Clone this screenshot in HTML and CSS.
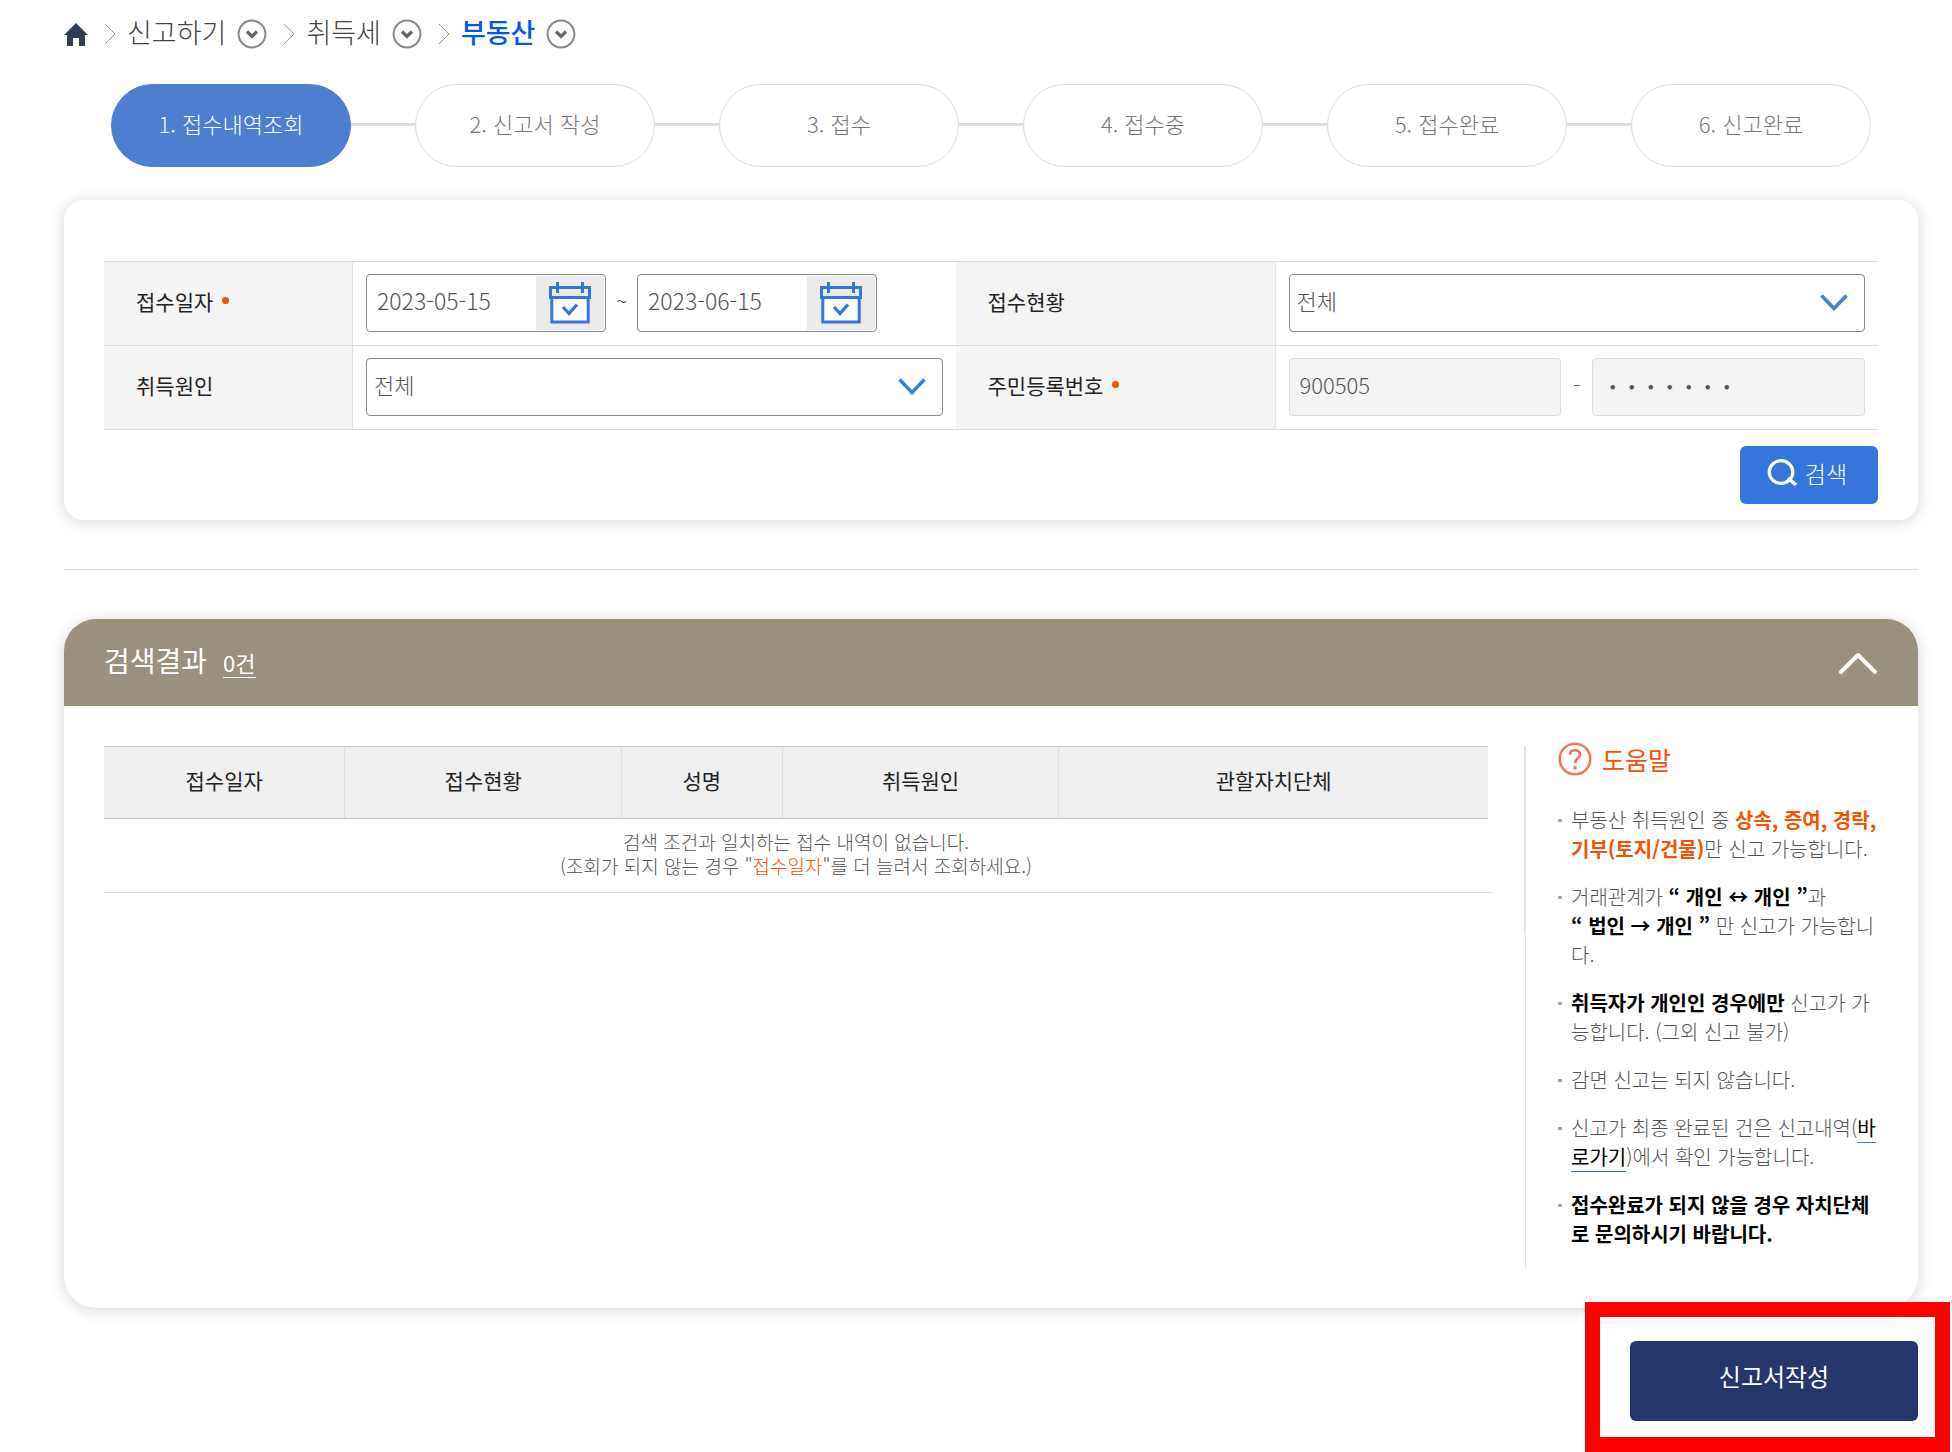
FILE: index.html
```html
<!DOCTYPE html>
<html lang="ko">
<head>
<meta charset="utf-8">
<meta name="viewport" content="width=device-width, initial-scale=1">
<title>취득세 신고 - 부동산</title>
<link rel="stylesheet" href="styles.css">
</head>
<body>
<svg class="defs" aria-hidden="true">
  <symbol id="i-sep" viewBox="0 0 12 22"><path d="M1 1l10 10L1 21" fill="none" stroke="#999" stroke-width="1"/></symbol>
  <symbol id="i-drop" viewBox="0 0 30 30"><circle cx="15" cy="15" r="13.4" fill="#fff" stroke="#888" stroke-width="2"/><path d="M10 12.500l5 5 5-5" fill="none" stroke="#666" stroke-width="3.200"/></symbol>
  <symbol id="i-chev" viewBox="0 0 28 17"><path d="M1.500 1.500L14 14.500 26.500 1.500" fill="none" stroke="#4a80d2" stroke-width="3.600"/></symbol>
  <symbol id="i-cal" viewBox="0 0 44 44">
    <path d="M3.500 18h37v23h-37z" fill="#fff"/>
    <path d="M2.500 6.500h39v10h-39zM3.800 17v24h36.400V17" fill="none" stroke="#3675dc" stroke-width="3"/>
    <path d="M9.500 1v11M34.500 1v11" fill="none" stroke="#3675dc" stroke-width="3"/>
    <path d="M15 26l6 6.500 8-9" fill="none" stroke="#3675dc" stroke-width="3.200"/>
  </symbol>
</svg>
<main class="page">
  <nav class="crumbs" aria-label="현재 위치">
    <a class="home" href="#" aria-label="홈"><svg width="24" height="23" viewBox="0 0 24 23"><path d="M12 0L24 12h-3v11h-6v-8H9v8H3V12H0z" fill="#323c55"/></svg></a>
    <svg class="sep"><use href="#i-sep"/></svg>
    <a href="#">신고하기</a><button class="drop" aria-label="신고하기 메뉴"><svg><use href="#i-drop"/></svg></button>
    <svg class="sep"><use href="#i-sep"/></svg>
    <a href="#">취득세</a><button class="drop" aria-label="취득세 메뉴"><svg><use href="#i-drop"/></svg></button>
    <svg class="sep"><use href="#i-sep"/></svg>
    <a class="current" href="#" aria-current="page">부동산</a><button class="drop" aria-label="부동산 메뉴"><svg><use href="#i-drop"/></svg></button>
  </nav>

  <ol class="steps">
    <li class="on"><span>1. 접수내역조회</span></li>
    <li><span>2. 신고서 작성</span></li>
    <li><span>3. 접수</span></li>
    <li><span>4. 접수중</span></li>
    <li><span>5. 접수완료</span></li>
    <li><span>6. 신고완료</span></li>
  </ol>

  <form class="search">
    <div class="fields">
      <label class="name req" for="from">접수일자</label>
      <div class="value">
        <div class="date"><input id="from" type="text" value="2023-05-15"><button type="button" aria-label="시작일 선택"><svg><use href="#i-cal"/></svg></button></div>
        <span class="mid">~</span>
        <div class="date"><input type="text" value="2023-06-15" aria-label="종료일"><button type="button" aria-label="종료일 선택"><svg><use href="#i-cal"/></svg></button></div>
      </div>
      <label class="name" for="state">접수현황</label>
      <div class="value"><div class="select"><select id="state"><option>전체</option></select><svg><use href="#i-chev"/></svg></div></div>
      <label class="name" for="cause">취득원인</label>
      <div class="value"><div class="select"><select id="cause"><option>전체</option></select><svg><use href="#i-chev"/></svg></div></div>
      <label class="name req" for="rrn">주민등록번호</label>
      <div class="value">
        <input class="off" id="rrn" type="text" value="900505" disabled>
        <span class="mid">-</span>
        <input class="off mask" type="text" value="・・・・・・・" aria-label="주민등록번호 뒷자리" disabled>
      </div>
    </div>
    <button class="find" type="button"><svg width="30" height="28" viewBox="0 0 30 28"><ellipse cx="14" cy="13" rx="11.800" ry="11.300" fill="none" stroke="#fff" stroke-width="3.200"/><path d="M21 19l8 7" stroke="#fff" stroke-width="3.600"/></svg>검색</button>
  </form>

  <hr class="rule">

  <section class="result">
    <header class="bar">
      <h2>검색결과</h2><span class="count">0건</span>
      <button class="fold" aria-label="접기"><svg width="40" height="24" viewBox="0 0 40 24"><path d="M3 21L20 4l17 17" fill="none" stroke="#fff" stroke-width="4" stroke-linecap="round" stroke-linejoin="round"/></svg></button>
    </header>
    <div class="body">
      <div class="list">
        <div class="grid">
          <table>
            <colgroup><col class="c1"><col class="c2"><col class="c3"><col class="c4"><col class="c5"></colgroup>
            <thead><tr><th>접수일자</th><th>접수현황</th><th>성명</th><th>취득원인</th><th>관할자치단체</th></tr></thead>
            <tbody><tr><td colspan="5">검색 조건과 일치하는 접수 내역이 없습니다.<br>(조회가 되지 않는 경우 "<em>접수일자</em>"를 더 늘려서 조회하세요.)</td></tr></tbody>
          </table>
        </div>
      </div>
      <aside class="help">
        <h3><svg width="34" height="34" viewBox="0 0 34 34" fill="none" stroke="#f0785a"><circle cx="17" cy="17" r="15.300" stroke-width="2.600"/><path d="M12 12.800c0-3 2.200-4.600 5-4.600s5 1.600 5 4.300c0 3.700-5 4-5 8.500" stroke-width="2.800"/><circle cx="17" cy="25.800" r="1.900" fill="#f0785a" stroke="none"/></svg>도움말</h3>
        <ul>
          <li>부동산 취득원인 중 <strong class="hot">상속, 증여, 경락,<br>기부(토지/건물)</strong>만 신고 가능합니다.</li>
          <li>거래관계가 <strong>“ 개인 ↔ 개인 ”</strong>과<br><strong>“ 법인 → 개인 ”</strong> 만 신고가 가능합니<br>다.</li>
          <li><strong>취득자가 개인인 경우에만</strong> 신고가 가<br>능합니다. (그외 신고 불가)</li>
          <li>감면 신고는 되지 않습니다.</li>
          <li>신고가 최종 완료된 건은 신고내역(<a href="#">바<br>로가기</a>)에서 확인 가능합니다.</li>
          <li><strong>접수완료가 되지 않을 경우 자치단체<br>로 문의하시기 바랍니다.</strong></li>
        </ul>
      </aside>
    </div>
  </section>

  <div class="actions">
    <button class="write" type="button">신고서작성</button>
    <span class="frame"></span>
  </div>
</main>
</body>
</html>
```
FILE: styles.css
```css
* { box-sizing: border-box; }
body {
  margin: 0;
  background: #fff;
  color: #555;
  font-family: "Noto Sans CJK KR", sans-serif;
  font-size: 20px;
  font-weight: 300;
  overflow-x: hidden;
}
button, input, select { font: inherit; color: inherit; margin: 0; }
button { border: 0; padding: 0; background: none; cursor: pointer; }
a { color: inherit; text-decoration: none; }
svg { display: block; flex: none; }
.defs { position: absolute; width: 0; height: 0; }
.page { padding: 14px 34px 31px 64px; }

/* breadcrumb */
.crumbs { display: flex; align-items: center; height: 40px; font-size: 27px; line-height: 36px; color: #444; }
.crumbs a { padding-bottom: 4px; }
.crumbs .home { padding: 0; }
.crumbs .sep { width: 12px; height: 22px; margin: 0 11px 0 16px; }
.crumbs .drop { margin-left: 11px; }
.crumbs .drop svg { width: 30px; height: 30px; }
.crumbs .current { color: #0058e6; font-weight: 500; }

/* progress steps */
.steps { display: flex; justify-content: space-between; margin: 30px 0 0; padding: 0 47px; list-style: none; }
.steps li { display: flex; align-items: center; flex: 1; font-size: 22px; color: #777; }
.steps li:first-child { flex: none; }
.steps li + li::before { content: ""; flex: 1; height: 3px; margin-bottom: 3px; background: #ddd; }
.steps span { display: flex; align-items: center; justify-content: center; width: 240px; height: 83px; padding-bottom: 5px; border: 1px solid #ddd; border-radius: 42px; }
.steps .on span { background: #4d7ecf; border-color: #4d7ecf; color: #fff; }

/* search panel */
.search { display: flex; flex-direction: column; margin-top: 33px; padding: 61px 40px 16px; border-radius: 20px; box-shadow: 0 2px 16px rgba(0, 0, 0, .16); }
.fields { display: grid; grid-template-columns: 249px 1fr 320px 1fr; border-bottom: 1px solid #ddd; }
.name, .value { display: flex; align-items: center; height: 84px; border-top: 1px solid #ddd; }
.name { padding: 0 0 6px 32px; background: #f4f4f4; border-right: 1px solid #e4e4e4; color: #222; font-size: 21px; font-weight: 400; }
.req::after { content: ""; width: 7px; height: 7px; margin-left: 9px; border-radius: 50%; background: #f35200; }
.value { padding: 0 13px 1px; font-size: 21px; }
.mid { width: 31px; padding-bottom: 6px; text-align: center; }
.date { display: flex; width: 240px; height: 58px; padding: 1px; border: 1px solid #888; border-radius: 4px; }
.date input { flex: 1; min-width: 0; padding: 0 9px 6px; border: 0; background: none; font-size: 23px; }
.date button { display: grid; place-items: center; width: 68px; background: #ebebeb; }
.date svg { width: 44px; height: 44px; }
.select { position: relative; flex: 1; }
.select select { display: block; width: 100%; height: 58px; padding: 0 7px 6px; border: 1px solid #888; border-radius: 4px; background: #fff; font-size: 22px; appearance: none; }
.select svg { position: absolute; right: 17px; top: 20px; width: 28px; height: 17px; pointer-events: none; }
.off { flex: 1; min-width: 0; height: 58px; padding: 0 10px 6px; border: 1px solid #ddd; border-radius: 4px; background: #f4f4f4; font-size: 22px; }
.mask { padding-bottom: 2px; font-size: 19px; font-weight: 500; }
.find { display: flex; align-items: center; justify-content: center; gap: 8px; align-self: flex-end; width: 138px; height: 58px; margin-top: 16px; padding: 0 4px 5px 0; border-radius: 6px; background: #3675dc; color: #fff; font-size: 23px; }

.rule { margin: 49px 0; border: 0; border-top: 1px solid #ddd; }

/* results */
.result { border-radius: 32px; box-shadow: 0 2px 16px rgba(0, 0, 0, .16); }
.bar { display: flex; align-items: center; height: 87px; padding: 0 40px; border-radius: 32px 32px 0 0; background: #9a907e; color: #fff; }
.bar h2 { margin: 0; padding-bottom: 5px; font-size: 28px; font-weight: 400; line-height: 40px; }
.count { margin-left: 16px; border-bottom: 1px solid #fff; font-size: 22px; font-weight: 400; line-height: 30px; }
.fold { margin-left: auto; }
.body { display: flex; padding: 40px; }
.list { flex: 1; align-self: flex-start; min-height: 187px; padding-right: 31px; border-right: 1px solid #e4e4e4; }
.grid { padding-right: 5px; border-bottom: 1px solid #ddd; }
.grid table { width: 100%; border-collapse: collapse; table-layout: fixed; text-align: center; }
.c1 { width: 17.4%; } .c2 { width: 20%; } .c3 { width: 11.6%; } .c4 { width: 20%; } .c5 { width: 31%; }
.grid th { height: 72px; padding: 0 0 6px; border: solid #c8c8c8; border-width: 1px 0; background: #efefef; color: #222; font-size: 21px; font-weight: 400; }
.grid th + th { border-left: 1px solid #ddd; }
.grid td { padding: 11px 0 14px; font-size: 19px; line-height: 24px; }
.grid em { color: #f35200; font-style: normal; }
.help { width: 353px; min-height: 522px; padding-left: 32px; border-left: 1px solid #e4e4e4; }
.help h3 { display: flex; align-items: center; gap: 10px; margin: 0; height: 26px; color: #f35200; font-size: 25px; font-weight: 400; }
.help ul { display: grid; gap: 19px; margin: 33px 0 0; padding: 0; list-style: none; line-height: 29px; }
.help li { position: relative; padding-left: 13px; white-space: nowrap; }
.help li::before { content: ""; position: absolute; left: 0; top: 14px; width: 4px; height: 3px; background: #aaa; }
.help strong { color: #000; font-weight: 700; }
.help .hot { color: #f35200; }
.help a { color: #000; font-weight: 400; border-bottom: 1px solid #3675dc; }

/* bottom action with its highlight frame */
.actions { position: relative; display: flex; margin: 33px 0 0 auto; width: 288px; }
.write { flex: 1; height: 80px; padding-bottom: 11px; border-radius: 6px; background: #24366b; color: #fff; font-size: 24px; font-weight: 400; }
.frame { position: absolute; inset: -39px -32px -31px -45px; border: 15px solid #f00; pointer-events: none; }
```
